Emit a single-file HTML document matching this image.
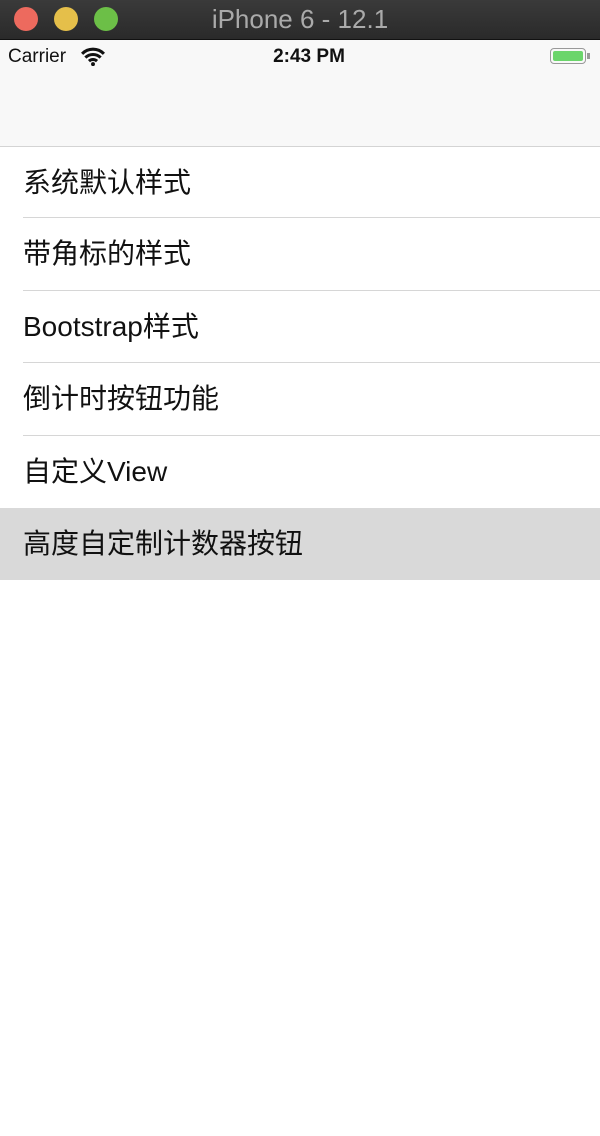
<!DOCTYPE html>
<html><head><meta charset="utf-8"><style>
body{margin:0;width:600px;height:1136px;background:#fff;font-family:"Liberation Sans","Noto Sans CJK SC",sans-serif;position:relative;overflow:hidden}
.tb{position:absolute;top:0;left:0;width:600px;height:39px;background:linear-gradient(#3a3a3a,#2a2a2a);border-bottom:1px solid #111}
.dot{position:absolute;top:7px;width:24px;height:24px;border-radius:50%}
.title{position:absolute;top:4px;width:600px;text-align:center;color:#aaa;font-size:26px}
.nav{position:absolute;top:40px;left:0;width:600px;height:106px;background:#f8f8f8;border-bottom:1px solid #d4d4d4}
.row{position:absolute;left:0;width:600px;height:72px;font-size:28px;color:#111;line-height:72px}
.row span{padding-left:23px}
.sep{position:absolute;left:23px;right:0;height:1px;background:#d6d6d6}
</style></head><body>
<div class="tb">
<div class="dot" style="left:14px;background:#ed6a5e"></div>
<div class="dot" style="left:54px;background:#e5bf4a"></div>
<div class="dot" style="left:94px;background:#6cbf47"></div>
<div class="title">iPhone 6 - 12.1</div>
</div>
<div class="nav">
<div style="position:absolute;left:8px;top:6px;font-size:19px;color:#111">Carrier</div>
<svg style="position:absolute;left:81px;top:7px" width="24" height="19" viewBox="0 0 22 17"><path d="M1 6a14 14 0 0 1 20 0M4 9.5a10 10 0 0 1 14 0M7.3 12.7a5.5 5.5 0 0 1 7.4 0" stroke="#111" stroke-width="2.8" fill="none"/><circle cx="11" cy="15.5" r="1.8" fill="#111"/></svg>
<div style="position:absolute;left:0;width:618px;text-align:center;top:6px;font-size:19px;font-weight:bold;color:#111">2:43 PM</div>
<div style="position:absolute;left:550px;top:8px;width:36px;height:16px;border:1.5px solid #999;border-radius:4px;box-sizing:border-box;padding:2px"><div style="width:100%;height:100%;background:#6bd56b;border-radius:2px"></div></div>
<div style="position:absolute;left:587px;top:13px;width:3px;height:6px;background:#999"></div>
</div>
<div class="row" style="top:147px"><span>系统默认样式</span></div>
<div class="sep" style="top:217px"></div>
<div class="row" style="top:218px"><span>带角标的样式</span></div>
<div class="sep" style="top:290px"></div>
<div class="row" style="top:291px"><span>Bootstrap样式</span></div>
<div class="sep" style="top:362px"></div>
<div class="row" style="top:363px"><span>倒计时按钮功能</span></div>
<div class="sep" style="top:435px"></div>
<div class="row" style="top:436px"><span>自定义View</span></div>
<div class="row" style="top:508px;background:#d9d9d9"><span>高度自定制计数器按钮</span></div>
</body></html>
